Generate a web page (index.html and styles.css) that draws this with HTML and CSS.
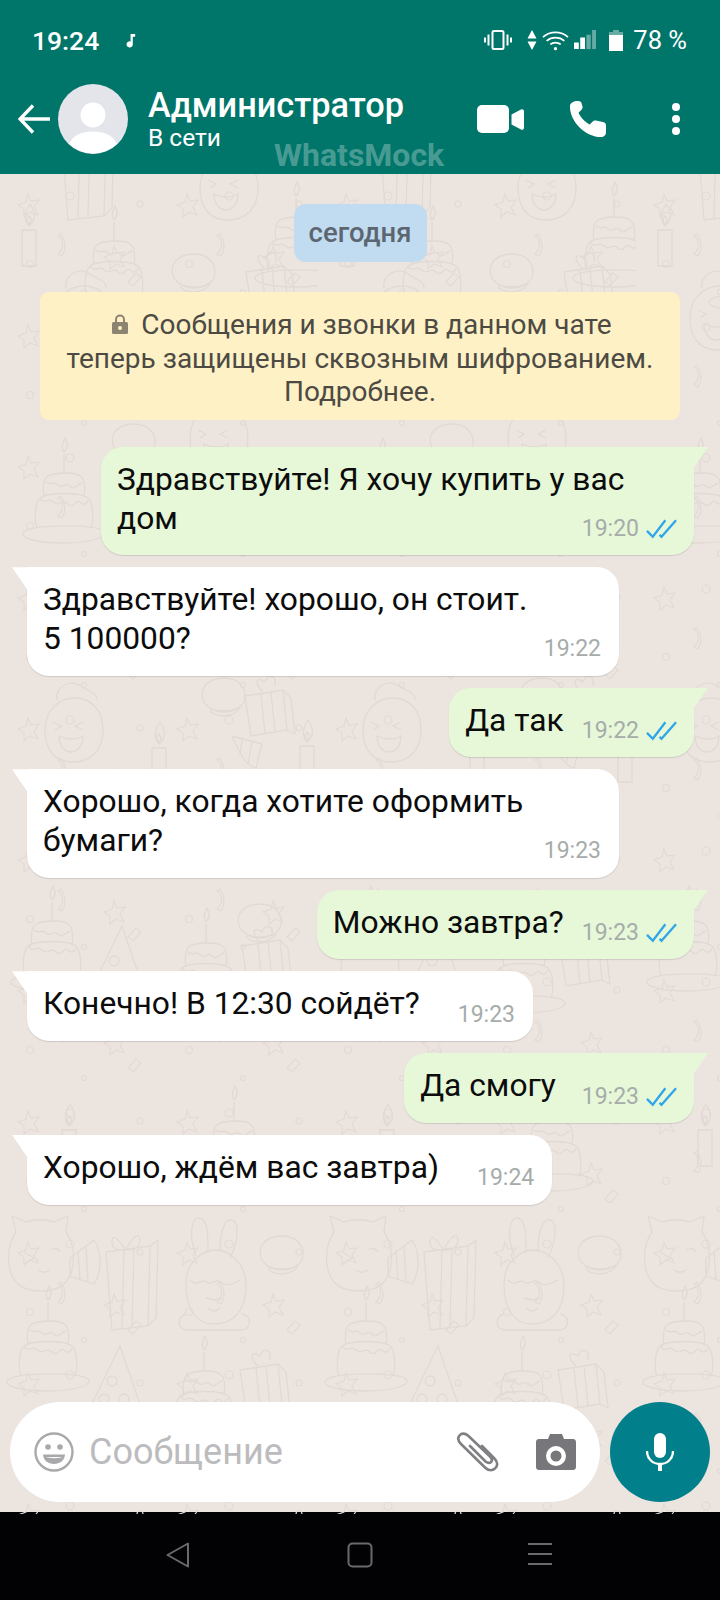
FILE: index.html
```html
<!DOCTYPE html>
<html>
<head>
  <title>WhatsMock chat</title>
  <link rel="stylesheet" href="styles.css">
</head>
<body>

  <div class="phone">

    <div class="top">
      <div class="status-bar">
        <span class="clock">19:24</span>
        <svg class="note" viewBox="0 0 12 16"><path d="M5 1h5v3H7.4v8.2a3.4 3.4 0 1 1-2.4-3.2z" fill="#fff"/></svg>
        <div class="status-right">
          <svg class="ic-vibrate" viewBox="0 0 28 20" fill="none" stroke="#fff"><rect x="8.5" y="1" width="11" height="18" rx="1.5" stroke-width="2"/><path d="M4.5 4.5v11M1 7.5v5M23.5 4.5v11M27 7.5v5" stroke-width="2"/></svg>
          <svg class="ic-arrows" viewBox="0 0 10 20"><path d="M5 0l4.5 8.5h-9zM5 20L.5 11.5h9z" fill="#fff"/></svg>
          <svg class="ic-wifi" viewBox="0 0 28 21" fill="none" stroke="#fff" stroke-width="1.8"><path d="M1 7c7.500-6.500 18.500-6.500 26 0M4.800 10.800c5.200-4.500 13.200-4.500 18.400 0M8.600 14.600c3-2.500 7.800-2.500 10.800 0"/><circle cx="14" cy="19" r="1.700" fill="#fff" stroke="none"/></svg>
          <svg class="ic-signal" viewBox="0 0 23 21"><path d="M0 13h5v7H0zM6.500 8h5v12h-5z" fill="#fff"/><path d="M13 5h4.500v15H13zM19 0h4v20h-4z" fill="#fff" opacity=".4"/></svg>
          <svg class="ic-battery" viewBox="0 0 14 21"><path d="M4 0h6v2h4v3H0V2h4z" fill="#fff" opacity=".4"/><path d="M0 5h14v16H0z" fill="#fff"/></svg>
          <span class="percent">78 %</span>
        </div>
      </div>

      <div class="app-bar">
        <svg class="ic-back" viewBox="0 0 32 30" fill="none" stroke="#fff" stroke-width="3.400"><path d="M32 15H3M15 1.500L2 15l13 13.500"/></svg>
        <svg class="avatar" viewBox="0 0 70 70"><circle cx="35" cy="35" r="35" fill="#e3e5ea"/><circle cx="35" cy="31" r="12.500" fill="#fff"/><path d="M11 60c4-9 13-12.500 24-12.500S55 51 59 60a35 35 0 0 1-48 0z" fill="#fff"/></svg>
        <div class="contact">
          <div class="contact-name">Администратор</div>
          <div class="contact-state">В сети</div>
        </div>
        <svg class="ic-video" viewBox="0 0 47 29"><rect width="32" height="28" rx="5" fill="#fff"/><path d="M34.500 9.500l9.500-5c1.500-.7 3 .2 3 1.800v16.400c0 1.600-1.500 2.500-3 1.800l-9.500-5z" fill="#fff"/></svg>
        <svg class="ic-phone" viewBox="0 0 36 36"><path d="M7.500 0C4 0 .2 1.500 0 5c-.5 15 15 31 31 31 3 0 5-1.500 5-5v-6.500c0-2-1-3-3-3.500l-7-1.500c-1.500-.3-2.500.2-3.500 1.200l-2.800 2.800C15 21 10.700 16.500 8.500 11.700l3-3c1-1 1.300-2 1-3.300L11.500 2C11 .5 9.500 0 7.500 0z" fill="#fff"/></svg>
        <div class="ic-dots"><i></i><i></i><i></i></div>
        <span class="watermark">WhatsMock</span>
      </div>
    </div>

    <div class="chat">
      <!-- doodle wallpaper behind the messages -->
      <svg class="wallpaper" width="720" height="1340">
        <defs>
          <g id="cake">
            <path d="M8 62c-4-2-4-24 2-30 8-6 40-6 48 0 6 6 6 28 2 30M10 32c6 8 8-2 14 4s8-4 14 2 8-6 12-2 6 2 8-2M14 30c-2-8 0-18 4-20 8-4 28-4 32 0 4 2 6 12 4 20M16 16c6 5 8-2 12 3s8-4 12 1 8-2 12-3M34 8V-12M34-14c-4-6 0-10 1-14 2 4 4 8-1 14M-6 66c10-8 70-8 80-1 6 6-14 12-40 12S-12 72-6 66z"/>
          </g>
          <g id="gift">
            <path d="M2 18l44-6-2 80-36 4zM20 16l-2 78M30 14l-2 78M46 12l8-6-2 78-8 8M22 16c-10-14-14-16-14-8s6 8 14 8c8 0 14-2 14-10s-8-4-14 10"/>
          </g>
          <g id="giftbox">
            <path d="M0 14l38-6 4 40-36 6zM16 12l4 40M26 10l4 40M38 8l8 8 4 36-8-4M18 10C8 0 12-6 20 0c2-8 12-8 10 4"/>
          </g>
          <g id="cat">
            <path d="M12 18L8 2l14 6c8-3 20-3 28 0L64 2l-2 16c10 14 10 38 0 50-10 12-40 12-50 0C2 56 2 32 12 18zM20 38l10 6-10 6M46 36c4-2 8-2 10 2M34 56c4 3 8 3 12 0M66 44l24-18c8 12 8 32 0 44l-24-8zM74 38l2 28M82 32l2 36"/>
          </g>
          <g id="bunny">
            <path d="M24 32C16 10 20-8 28-6s8 18 8 34M48 28c0-18 4-34 12-32s6 22-2 38M14 60c0-24 18-34 30-34s30 12 30 36-12 38-32 38S14 82 14 60zM18 56c8 8 10-2 16 2s10-4 14 0 10 4 20-2M34 74l8 2 8-2M36 84c4 4 8 4 12 0M14 90c-8 2-10 14 0 16h56c10-2 10-14 0-16"/>
          </g>
          <g id="chick">
            <path d="M0 44C0 24 14 12 30 12c16 0 28 12 28 32S46 76 28 76 0 64 0 44zM12 14C10 2 24-8 36 0c8 6 16 6 16 14M8 36l8 4-6 4M38 36l-8 4 8 4M14 50c8 4 18 4 24 0 0 10-6 16-12 16s-12-6-12-16z"/>
          </g>
          <g id="hat">
            <path d="M32 0L0 66c16 12 40 10 54-2zM24 30a5 5 0 1 0 .1 0M16 48a5 5 0 1 0 .1 0M36 48a5 5 0 1 0 .1 0"/>
          </g>
          <g id="candle">
            <path d="M2 26h14v36H2zM9 22C2 14 6 6 10 0c4 6 8 14-1 22zM9 20c-3-3-2-6 0-8 2 2 3 5 0 8z"/>
          </g>
          <g id="horn">
            <path d="M0 10l30 8-6 24c-10-2-16-14-24-32zM10 14l-2 14M20 16l-4 22"/>
          </g>
          <g id="bulb">
            <path d="M4 24C-2 10 8 0 24 0s24 12 20 24c-6 12-34 12-40 0zM6 26c6 10 30 12 38-2M10 32c4 8 24 8 30-2"/>
          </g>
          <g id="star">
            <path d="M10 0l3 7 8-1-5 7 4 8-8-3-6 5v-8l-6-4 8-3z"/>
          </g>

          <!-- the large doodles, they only repeat sideways -->
          <pattern id="doodles" width="318" height="1340" patternUnits="userSpaceOnUse">
            <g fill="none" stroke="#e1d9d3" stroke-width="1.300">
              <use href="#chick" x="200" y="-30"/>
              <use href="#cake" x="262" y="36"/>
              <use href="#gift" x="60" y="-50"/>
              <use href="#cake" x="80" y="60"/>
              <use href="#giftbox" x="246" y="84"/>
              <use href="#bulb" x="170" y="80"/>
              <use href="#chick" x="54" y="100"/>
              <use href="#horn" x="120" y="120"/>
              <use href="#candle" x="20" y="30"/>
              <use href="#cake" x="30" y="292"/>
              <use href="#chick" x="190" y="220"/>
              <use href="#bulb" x="110" y="250"/>
              <use href="#chick" x="45" y="512"/>
              <use href="#bulb" x="200" y="504"/>
              <use href="#giftbox" x="245" y="508"/>
              <use href="#candle" x="150" y="548"/>
              <use href="#candle" x="298" y="546"/>
              <use href="#horn" x="232" y="552"/>
              <use href="#cake" x="18" y="740"/>
              <use href="#hat" x="90" y="752"/>
              <use href="#cake" x="172" y="762"/>
              <use href="#bulb" x="236" y="730"/>
              <use href="#giftbox" x="242" y="758"/>
              <use href="#cat" x="4" y="1040"/>
              <use href="#gift" x="104" y="1060"/>
              <use href="#bunny" x="172" y="1050"/>
              <use href="#bulb" x="258" y="1062"/>
              <use href="#cake" x="14" y="1140"/>
              <use href="#hat" x="88" y="1172"/>
              <use href="#cake" x="170" y="1190"/>
              <use href="#giftbox" x="240" y="1182"/>
              <use href="#bulb" x="90" y="990"/>
              <use href="#cake" x="200" y="940"/>
              <use href="#candle" x="60" y="930"/>
            </g>
          </pattern>

          <!-- small stars and dots scattered in between -->
          <pattern id="confetti" width="159" height="131" patternUnits="userSpaceOnUse">
            <g fill="none" stroke="#e2dad4" stroke-width="1.200">
              <use href="#star" x="18" y="20"/>
              <use href="#star" x="104" y="72"/>
              <circle cx="70" cy="22" r="4"/>
              <circle cx="140" cy="30" r="3"/>
              <circle cx="30" cy="90" r="3.500"/>
              <circle cx="84" cy="118" r="2.500"/>
              <path d="M58 62c6 4 6 12 0 18l4 2c4-6 4-14-1-22zM128 108l8-9 5 4-8 9z"/>
            </g>
          </pattern>
        </defs>
        <rect width="720" height="1340" fill="url(#confetti)"/>
        <rect width="720" height="1340" fill="url(#doodles)"/>
      </svg>

      <div class="chip-row"><span class="date-chip">сегодня</span></div>

      <div class="notice">
        <svg class="ic-lock" viewBox="0 0 16 20"><path d="M3 8V5.500a5 5 0 0 1 10 0V8h1.500A1.500 1.500 0 0 1 16 9.500v9a1.500 1.500 0 0 1-1.500 1.500h-13A1.500 1.500 0 0 1 0 18.500v-9A1.500 1.500 0 0 1 1.500 8zm2 0h6V5.500a3 3 0 0 0-6 0zm3 4a2 2 0 1 0 0 4 2 2 0 0 0 0-4z" fill="#8c8470" fill-rule="evenodd"/></svg>
        Сообщения и звонки в данном чате<br>
        теперь защищены сквозным шифрованием.<br>
        Подробнее.
      </div>

      <div class="msg out stacked first">
        <div class="msg-text">Здравствуйте! Я хочу купить у вас<br>дом</div>
        <div class="msg-meta">19:20 <svg class="ticks" viewBox="0 0 32 20" fill="none" stroke="#2fa6ea" stroke-width="2.400"><path d="M1 12l6 6L20 1M14 16l2 2L31 1"/></svg></div>
      </div>

      <div class="msg in stacked">
        <div class="msg-text">Здравствуйте! хорошо, он стоит.<br>5 100000?</div>
        <div class="msg-meta">19:22</div>
      </div>

      <div class="msg out">
        <div class="msg-text">Да так</div>
        <div class="msg-meta">19:22 <svg class="ticks" viewBox="0 0 32 20" fill="none" stroke="#2fa6ea" stroke-width="2.400"><path d="M1 12l6 6L20 1M14 16l2 2L31 1"/></svg></div>
      </div>

      <div class="msg in stacked">
        <div class="msg-text">Хорошо, когда хотите оформить<br>бумаги?</div>
        <div class="msg-meta">19:23</div>
      </div>

      <div class="msg out">
        <div class="msg-text">Можно завтра?</div>
        <div class="msg-meta">19:23 <svg class="ticks" viewBox="0 0 32 20" fill="none" stroke="#2fa6ea" stroke-width="2.400"><path d="M1 12l6 6L20 1M14 16l2 2L31 1"/></svg></div>
      </div>

      <div class="msg in">
        <div class="msg-text">Конечно! В 12:30 сойдёт?</div>
        <div class="msg-meta">19:23</div>
      </div>

      <div class="msg out">
        <div class="msg-text">Да смогу&nbsp;</div>
        <div class="msg-meta">19:23 <svg class="ticks" viewBox="0 0 32 20" fill="none" stroke="#2fa6ea" stroke-width="2.400"><path d="M1 12l6 6L20 1M14 16l2 2L31 1"/></svg></div>
      </div>

      <div class="msg in">
        <div class="msg-text">Хорошо, ждём вас завтра)</div>
        <div class="msg-meta">19:24</div>
      </div>

      <div class="composer">
        <div class="input-box">
          <svg class="ic-emoji" viewBox="0 0 40 40" fill="none"><circle cx="20" cy="20" r="18.500" stroke="#a9a9ab" stroke-width="2.400"/><circle cx="14" cy="15" r="2.800" fill="#a9a9ab"/><circle cx="26" cy="15" r="2.800" fill="#a9a9ab"/><path d="M9 22.500h22c-.5 6-5 9.500-11 9.500S9.500 28.500 9 22.500z" fill="#a9a9ab"/><path d="M12 25h16c-1.500 1.500-13 1.500-16 0z" fill="#fff"/></svg>
          <span class="placeholder">Сообщение</span>
          <svg class="ic-clip" viewBox="0 0 44 40" fill="none" stroke="#808084" stroke-width="2.600" stroke-linecap="round"><path d="M26 14l12 12c4 4 4 8 1 10.500s-7 2-10-1L5 12C2 9 1.500 6 3.500 3.500S9 1 12 3.500l22 21c2 2 2.500 4 1 5.500s-3.500 1-5.500-.5L14 14"/></svg>
          <svg class="ic-camera" viewBox="0 0 40 36"><path d="M3 5h9l2-5h12l2 5h9c1.700 0 3 1.300 3 3v25c0 1.700-1.300 3-3 3H3c-1.700 0-3-1.300-3-3V8c0-1.700 1.300-3 3-3zm17 7a10 10 0 1 0 0 20 10 10 0 0 0 0-20zm0 4.500a5.500 5.500 0 1 1 0 11 5.500 5.500 0 0 1 0-11z" fill="#77767a" fill-rule="evenodd"/></svg>
        </div>
        <div class="mic-button">
          <svg class="ic-mic" viewBox="0 0 28 38"><rect x="8" y="0" width="12" height="25" rx="6" fill="#fff"/><path d="M1 18c0 8 6 13 13 13s13-5 13-13" fill="none" stroke="#fff" stroke-width="2.400"/><path d="M12 30h4v8h-4z" fill="#fff"/></svg>
        </div>
      </div>
    </div>

    <div class="nav-bar">
      <svg class="nav-back" viewBox="0 0 24 26" fill="none" stroke="#6a6a6c" stroke-width="2" stroke-linejoin="round"><path d="M22 1.500v23L1.500 13z"/></svg>
      <svg class="nav-home" viewBox="0 0 26 26" fill="none" stroke="#6a6a6c" stroke-width="2"><rect x="1.500" y="1.500" width="23" height="23" rx="4"/></svg>
      <svg class="nav-menu" viewBox="0 0 24 24" fill="none" stroke="#6a6a6c" stroke-width="2"><path d="M0 2h24M0 12h24M0 22h24"/></svg>
    </div>

  </div>

</body>
</html>
```

FILE: styles.css
```css
* {
  box-sizing: border-box;
}

body {
  margin: 0;
  font-family: Roboto, "Noto Sans", sans-serif;
  background: #000;
}

svg {
  display: block;
  flex: none;
}

.phone {
  width: 720px;
  height: 1600px;
  display: flex;
  flex-direction: column;
  overflow: hidden;
}

/* top bar */
.top {
  height: 174px;
  background-color: #00756a;
  color: #fff;
}

.status-bar {
  height: 80px;
  padding: 0 33px 0 32px;
  display: flex;
  align-items: center;
}

.clock {
  font-size: 26.500px;
  font-weight: 500;
}

.note {
  width: 11px;
  height: 15px;
  margin-left: 27px;
}

.status-right {
  margin-left: auto;
  display: flex;
  align-items: center;
}

.ic-vibrate { width: 28px; height: 20px; }
.ic-arrows { width: 10px; height: 20px; margin-left: 15px; }
.ic-wifi { width: 27px; height: 21px; margin-left: 5px; }
.ic-signal { width: 22px; height: 20px; margin-left: 5px; }
.ic-battery { width: 14px; height: 21px; margin-left: 13px; }

.percent {
  font-size: 25.500px;
  margin-left: 10px;
}

.app-bar {
  position: relative;
  height: 78px;
  padding: 0 34px 0 18px;
  display: flex;
  align-items: center;
}

.ic-back { width: 32px; height: 30px; }

.avatar {
  width: 70px;
  height: 70px;
  margin-left: 8px;
}

.contact {
  margin-left: 20px;
  width: 329px;
}

.contact-name {
  font-size: 34.300px;
  font-weight: 500;
  line-height: 38px;
}

.contact-state {
  font-size: 24.500px;
  line-height: 28px;
}

.ic-video { width: 47px; height: 29px; }
.ic-phone { width: 36px; height: 36px; margin-left: 46px; }

.ic-dots {
  margin-left: 66px;
  display: flex;
  flex-direction: column;
  gap: 4px;
}

.ic-dots i {
  display: block;
  width: 8px;
  height: 8px;
  border-radius: 50%;
  background: #fff;
}

.watermark {
  position: absolute;
  left: 274px;
  top: 56px;
  font-size: 32px;
  font-weight: 700;
  color: rgba(255, 255, 255, 0.3);
}

/* chat area */
.chat {
  position: relative;
  flex: 1;
  padding-top: 30px;
  background-color: #ece4df;
  display: flex;
  flex-direction: column;
}

.wallpaper {
  position: absolute;
  left: 0;
  top: 0;
}

.chip-row {
  position: relative;
  display: flex;
  justify-content: center;
}

.date-chip {
  width: 133px;
  height: 58px;
  line-height: 58px;
  text-align: center;
  border-radius: 12px;
  background-color: #c1dcf1;
  color: #5c6670;
  font-size: 27.500px;
  font-weight: 500;
}

.notice {
  position: relative;
  margin: 30px 40px 0;
  height: 128px;
  padding-top: 16px;
  border-radius: 9px;
  background-color: #fef1c5;
  color: #4d4a44;
  font-size: 28px;
  line-height: 33.6px;
  text-align: center;
}

.ic-lock {
  display: inline-block;
  width: 16px;
  height: 20px;
  margin: 0 6px 0 4px;
}

.msg {
  position: relative;
  display: flex;
  align-items: flex-end;
  margin-top: 12px;
  padding: 14px 18px 17.250px 16px;
  border-radius: 22px;
  font-size: 31.750px;
  line-height: 38.500px;
  color: #0c0c0c;
  box-shadow: 0 1px 1px rgba(0, 0, 0, 0.12);
}

.msg.first {
  margin-top: 27px;
}

.msg.out {
  align-self: flex-end;
  margin-right: 26px;
  padding-right: 17px;
  background-color: #e6f8d8;
  border-top-right-radius: 0;
}

.msg.in {
  align-self: flex-start;
  margin-left: 27px;
  background-color: #fff;
  border-top-left-radius: 0;
}

.msg::before {
  content: "";
  position: absolute;
  top: 0;
  width: 15px;
  height: 22px;
}

.msg.out::before {
  right: -14px;
  background-color: #e6f8d8;
  clip-path: polygon(0 0, 100% 0, 0 100%);
}

.msg.in::before {
  left: -15px;
  background-color: #fff;
  clip-path: polygon(0 0, 100% 0, 100% 100%);
}

.msg.stacked {
  display: grid;
}

.msg.stacked > * {
  grid-area: 1 / 1;
}

.msg.stacked .msg-meta {
  justify-self: end;
  align-self: end;
}

.msg.stacked.out { width: 593px; }
.msg.stacked.in { width: 592px; }

.msg-meta {
  display: flex;
  align-items: center;
  gap: 7px;
  margin-bottom: -6px;
  font-size: 23px;
  line-height: 30px;
  color: #a6acaa;
}

.msg.out .msg-meta { margin-left: 18px; }
.msg.in .msg-meta { margin-left: 38px; }

.ticks {
  width: 31px;
  height: 20px;
}

/* message input */
.composer {
  position: relative;
  margin-top: auto;
  padding: 0 10px 10px;
  display: flex;
  gap: 10px;
}

.input-box {
  width: 590px;
  height: 100px;
  padding: 0 24px;
  border-radius: 50px;
  background: #fff;
  display: flex;
  align-items: center;
}

.ic-emoji { width: 40px; height: 40px; }

.placeholder {
  margin-left: 15px;
  width: 368px;
  font-size: 36px;
  color: #bcbcbe;
}

.ic-clip { width: 44px; height: 40px; }
.ic-camera { width: 40px; height: 36px; margin-left: 36px; }

.mic-button {
  width: 100px;
  height: 100px;
  border-radius: 50%;
  background-color: #017f8a;
  display: flex;
  align-items: center;
  justify-content: center;
}

.ic-mic { width: 28px; height: 38px; }

/* android nav */
.nav-bar {
  height: 88px;
  background: #020104;
  padding-top: 30px;
  display: flex;
}

.nav-back { width: 24px; height: 26px; margin-left: 166px; }
.nav-home { width: 26px; height: 26px; margin-left: 157px; }
.nav-menu { width: 24px; height: 24px; margin-left: 155px; }
```
